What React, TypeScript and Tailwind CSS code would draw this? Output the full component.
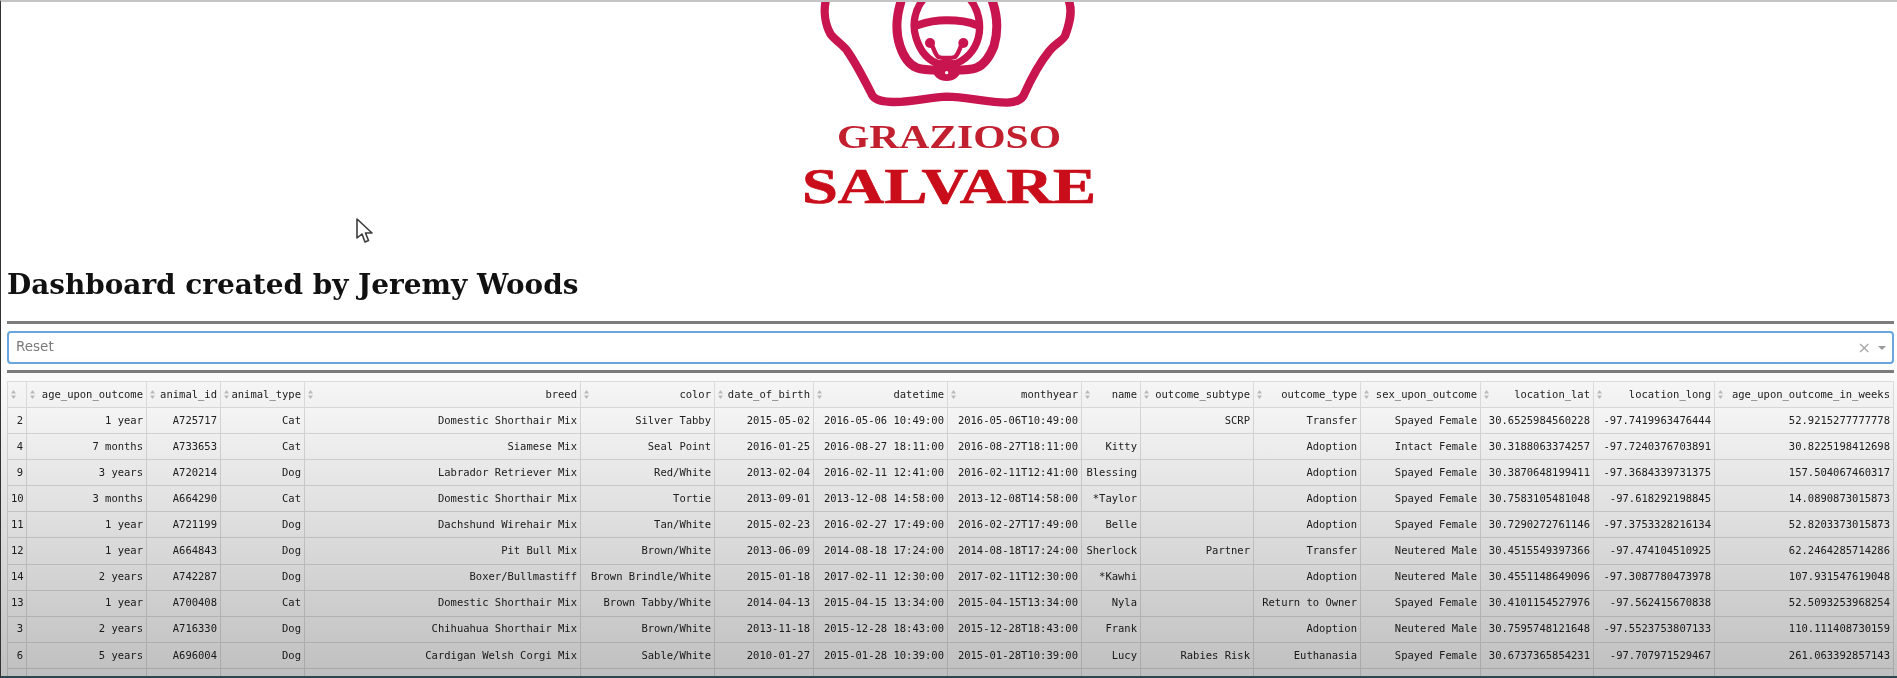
const columnWidths = [19, 120, 74, 84, 276, 134, 99, 134, 134, 59, 113, 107, 120, 113, 121, 179]

const columns = [
  '',
  'age_upon_outcome',
  'animal_id',
  'animal_type',
  'breed',
  'color',
  'date_of_birth',
  'datetime',
  'monthyear',
  'name',
  'outcome_subtype',
  'outcome_type',
  'sex_upon_outcome',
  'location_lat',
  'location_long',
  'age_upon_outcome_in_weeks',
]

const rows = [
  ['2', '1 year', 'A725717', 'Cat', 'Domestic Shorthair Mix', 'Silver Tabby', '2015-05-02', '2016-05-06 10:49:00', '2016-05-06T10:49:00', '', 'SCRP', 'Transfer', 'Spayed Female', '30.6525984560228', '-97.7419963476444', '52.9215277777778'],
  ['4', '7 months', 'A733653', 'Cat', 'Siamese Mix', 'Seal Point', '2016-01-25', '2016-08-27 18:11:00', '2016-08-27T18:11:00', 'Kitty', '', 'Adoption', 'Intact Female', '30.3188063374257', '-97.7240376703891', '30.8225198412698'],
  ['9', '3 years', 'A720214', 'Dog', 'Labrador Retriever Mix', 'Red/White', '2013-02-04', '2016-02-11 12:41:00', '2016-02-11T12:41:00', 'Blessing', '', 'Adoption', 'Spayed Female', '30.3870648199411', '-97.3684339731375', '157.504067460317'],
  ['10', '3 months', 'A664290', 'Cat', 'Domestic Shorthair Mix', 'Tortie', '2013-09-01', '2013-12-08 14:58:00', '2013-12-08T14:58:00', '*Taylor', '', 'Adoption', 'Spayed Female', '30.7583105481048', '-97.618292198845', '14.0890873015873'],
  ['11', '1 year', 'A721199', 'Dog', 'Dachshund Wirehair Mix', 'Tan/White', '2015-02-23', '2016-02-27 17:49:00', '2016-02-27T17:49:00', 'Belle', '', 'Adoption', 'Spayed Female', '30.7290272761146', '-97.3753328216134', '52.8203373015873'],
  ['12', '1 year', 'A664843', 'Dog', 'Pit Bull Mix', 'Brown/White', '2013-06-09', '2014-08-18 17:24:00', '2014-08-18T17:24:00', 'Sherlock', 'Partner', 'Transfer', 'Neutered Male', '30.4515549397366', '-97.474104510925', '62.2464285714286'],
  ['14', '2 years', 'A742287', 'Dog', 'Boxer/Bullmastiff', 'Brown Brindle/White', '2015-01-18', '2017-02-11 12:30:00', '2017-02-11T12:30:00', '*Kawhi', '', 'Adoption', 'Neutered Male', '30.4551148649096', '-97.3087780473978', '107.931547619048'],
  ['13', '1 year', 'A700408', 'Cat', 'Domestic Shorthair Mix', 'Brown Tabby/White', '2014-04-13', '2015-04-15 13:34:00', '2015-04-15T13:34:00', 'Nyla', '', 'Return to Owner', 'Spayed Female', '30.4101154527976', '-97.562415670838', '52.5093253968254'],
  ['3', '2 years', 'A716330', 'Dog', 'Chihuahua Shorthair Mix', 'Brown/White', '2013-11-18', '2015-12-28 18:43:00', '2015-12-28T18:43:00', 'Frank', '', 'Adoption', 'Neutered Male', '30.7595748121648', '-97.5523753807133', '110.111408730159'],
  ['6', '5 years', 'A696004', 'Dog', 'Cardigan Welsh Corgi Mix', 'Sable/White', '2010-01-27', '2015-01-28 10:39:00', '2015-01-28T10:39:00', 'Lucy', 'Rabies Risk', 'Euthanasia', 'Spayed Female', '30.6737365854231', '-97.707971529467', '261.063392857143'],
  ['', '', '', '', '', '', '', '', '', '', '', '', '', '', '', ''],
]

function Logo() {
  return (
    <svg
      className="mx-auto block h-[114px] w-[380px]"
      viewBox="-3 3 1140 342"
      fill="none"
      stroke="#c8144f"
      strokeLinecap="round"
      strokeLinejoin="round"
    >
      <path
        strokeWidth="25"
        d="M198 -5 C190 30 195 70 212 100 C230 122 250 132 262 150 C290 190 315 240 338 285 C350 300 370 302 400 303 C460 304 510 288 560 287 C620 288 680 304 740 305 C765 304 782 298 790 285 C810 240 835 190 868 150 C885 128 905 122 915 105 C928 70 940 30 925 -5"
      />
      <path strokeWidth="27" d="M425 -5 C410 40 405 90 420 135 C430 165 445 190 470 200 C490 207 510 207 535 207" />
      <path strokeWidth="27" d="M695 -5 C712 40 715 90 702 135 C690 165 675 190 650 200 C630 207 610 207 585 207" />
      <path
        strokeWidth="22"
        d="M490 -5 C465 25 455 70 468 110 C480 150 505 180 540 190 L580 190 C615 180 645 150 655 110 C665 70 655 25 630 -5"
      />
      <path strokeWidth="24" d="M475 72 C505 62 535 58 560 58 C590 58 625 62 650 72" />
      <circle cx="510" cy="126" r="15" fill="#c8144f" stroke="none" />
      <circle cx="610" cy="126" r="15" fill="#c8144f" stroke="none" />
      <path strokeWidth="13" d="M515 130 C522 145 525 160 535 168 C545 172 575 172 585 168 C595 160 598 145 605 130" />
      <ellipse cx="560" cy="207" rx="42" ry="33" fill="#c8144f" stroke="none" />
      <circle cx="560" cy="215" r="5" fill="#ffffff" stroke="none" />
    </svg>
  )
}

function SortIcon() {
  return (
    <svg className="h-[9px] w-[5px] shrink-0" viewBox="0 0 5 9" fill="#c0c0c0">
      <path d="M2.5 0 L5 3.5 L0 3.5 Z" />
      <path d="M2.5 9 L5 5.5 L0 5.5 Z" />
    </svg>
  )
}

function DataTable() {
  return (
    <table className="w-[1886px] table-fixed border-collapse font-['DejaVu_Sans_Mono',monospace] text-[10.5px] text-[#222222]">
      <colgroup>
        {columnWidths.map((width, index) => (
          <col key={index} style={{ width }} />
        ))}
      </colgroup>
      <thead>
        <tr className="h-[26px] bg-[#fbfbfb]">
          {columns.map((column, index) => (
            <th key={index} className="border border-[#e0e0e0] px-[3px] font-normal">
              <div className="flex items-center justify-between">
                <SortIcon />
                <span className="whitespace-nowrap">{column}</span>
              </div>
            </th>
          ))}
        </tr>
      </thead>
      <tbody>
        {rows.map((row, rowIndex) => (
          <tr key={rowIndex} className="h-[26.1px] bg-white">
            {row.map((cell, index) => (
              <td
                key={index}
                className="overflow-hidden border border-[#dedede] px-[3px] text-right whitespace-nowrap"
              >
                {cell}
              </td>
            ))}
          </tr>
        ))}
      </tbody>
    </table>
  )
}

export default function App() {
  return (
    <div className="relative h-[678px] w-[1897px] overflow-hidden border-t-2 border-l border-t-[#c4c4c4] border-l-[#333333] bg-white blur-[0.5px]">
      <Logo />

      <div className="mt-[6px] flex flex-col items-center">
        <div className="origin-center scale-x-[1.26] font-['Liberation_Serif',serif] text-[33px] leading-[30px] font-bold text-[#c21f2f]">
          GRAZIOSO
        </div>
        <div className="mt-[11px] origin-center scale-x-[1.29] font-['Liberation_Serif',serif] text-[50px] leading-[46px] font-bold text-[#c90d1a] [-webkit-text-stroke:0.7px_#c90d1a]">
          SALVARE
        </div>
      </div>

      <div className="pr-[3px] pl-[6px]">
        <h1 className="mt-[58px] font-['DejaVu_Serif',serif] text-[27.9px] leading-[36px] font-bold text-[#111111]">
          Dashboard created by Jeremy Woods
        </h1>

        <div className="mt-[18px] h-[3px] bg-[#7d7d7d]" />

        <div className="mt-[7px] flex h-[33px] items-center justify-between rounded-[4px] border-2 border-[#6aa6dc] bg-white pr-[6px] pl-[7px]">
          <span className="-translate-y-px font-['DejaVu_Sans',sans-serif] text-[13.5px] text-[#7a7a7a]">Reset</span>
          <div className="flex items-center gap-[7px]">
            <span className="font-['DejaVu_Sans',sans-serif] text-[16px] leading-none text-[#a8a8a8]">×</span>
            <span className="h-0 w-0 border-x-[4px] border-t-[4px] border-x-transparent border-t-[#9a9a9a]" />
          </div>
        </div>

        <div className="mt-[6px] h-[3px] bg-[#7d7d7d]" />

        <div className="mt-[8px]">
          <DataTable />
        </div>
      </div>

      {/* cursor left in the frame */}
      <svg className="absolute top-[216px] left-[354px] h-[26px] w-[19px]" viewBox="0 0 19 26" fill="#ffffff" stroke="#3c3c3c" strokeWidth="1.6" strokeLinejoin="round">
        <path d="M2 1 L2 20 L7 16 L10 24 L13.5 22.5 L10.5 15 L17 15 Z" />
      </svg>

      {/* video player shade over the lower part */}
      <div className="pointer-events-none absolute inset-x-0 top-[350px] bottom-0 bg-gradient-to-b from-black/0 to-black/25" />
      <div className="pointer-events-none absolute inset-x-0 bottom-0 h-[2px] bg-[#2d4650]" />
    </div>
  )
}
